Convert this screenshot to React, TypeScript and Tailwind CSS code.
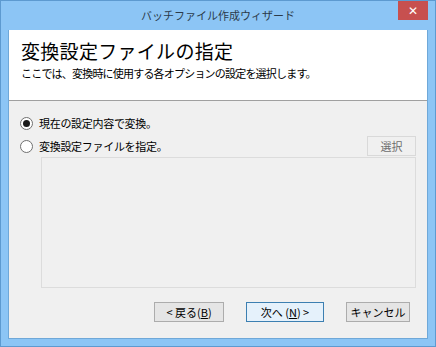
import React from "react";

const jp = { fontFamily: '"Noto Sans CJK JP", "Noto Sans", sans-serif' };

const Radio: React.FC<{ checked?: boolean; label: string }> = ({ checked, label }) => (
  <label className="flex items-center gap-[6px] h-[20px] text-[11px] tracking-[-0.3px] text-black">
    <span className="w-[13px] h-[13px] rounded-full border border-[#707070] bg-white flex items-center justify-center">
      {checked && <span className="w-[7px] h-[7px] rounded-full bg-[#1a1a1a]" />}
    </span>
    <span>{label}</span>
  </label>
);

const Btn: React.FC<{ children: React.ReactNode; w: string; focus?: boolean; disabled?: boolean }> = ({ children, w, focus, disabled }) => (
  <button
    className={
      focus
        ? `${w} h-[20px] text-[11px] border border-[#3c7fb1] bg-[#e5f1fb] text-black leading-none`
        : disabled
        ? `${w} h-[20px] text-[11px] border border-[#d9d9d9] bg-[#f0f0f0] text-[#6d6d6d] leading-none`
        : `${w} h-[20px] text-[11px] border border-[#acacac] bg-[#e5e5e5] text-black leading-none`
    }
  >
    {children}
  </button>
);

const App: React.FC = () => {
  return (
    <div style={jp} className="w-[436px] h-[347px] bg-[#8cc5f5] border border-[#5d9ad0] flex flex-col overflow-hidden">
      <div className="h-[29px] relative flex items-center justify-center">
        <span className="text-[11px] text-[#2b3b4b]">バッチファイル作成ウィザード</span>
        <div className="absolute right-[7px] top-[-1px] w-[30px] h-[20px] bg-[#c7504f] flex items-center justify-center text-white text-[12px] leading-none">
          ✕
        </div>
      </div>
      <div className="mx-[7px] h-[309px] flex flex-col border border-[#6fa8d8] border-t-0">
        <div className="h-[71px] bg-white border-b border-[#a0a0a0] pl-[12px] pt-[8px]">
          <div className="text-[19px] leading-[26px] text-black tracking-[0.3px]">変換設定ファイルの指定</div>
          <div className="text-[11px] leading-[16px] text-black mt-[1px] tracking-[-0.8px]">ここでは、変換時に使用する各オプションの設定を選択します。</div>
        </div>
        <div className="flex-1 bg-[#f0f0f0] flex flex-col pl-[11px] pr-[11px] pt-[12px]">
          <Radio checked label="現在の設定内容で変換。" />
          <div className="flex items-center justify-between mt-[3px]">
            <Radio label="変換設定ファイルを指定。" />
            <Btn w="w-[49px]" disabled>選択</Btn>
          </div>
          <div className="ml-[21px] mt-[1px] h-[131px] border border-[#dcdcdc] bg-[#f0f0f0]" />
          <div className="flex justify-end gap-[22px] mt-[14px] pr-[6px]">
            <div className="flex gap-[22px]">
              <Btn w="w-[70px]">
                &lt; 戻る(<span className="underline">B</span>)
              </Btn>
              <Btn w="w-[78px]" focus>
                次へ (<span className="underline">N</span>) &gt;
              </Btn>
            </div>
            <Btn w="w-[64px]">キャンセル</Btn>
          </div>
        </div>
      </div>
    </div>
  );
};

export default App;
